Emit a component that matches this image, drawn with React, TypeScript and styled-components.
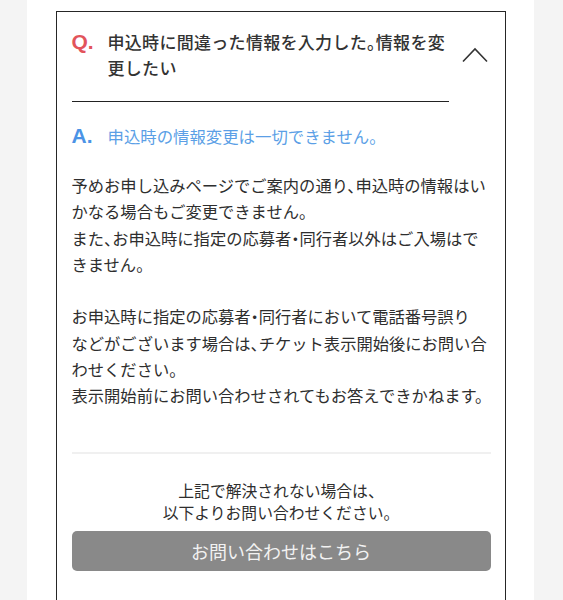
import React from "react";
import styled, { createGlobalStyle } from "styled-components";

const GlobalStyle = createGlobalStyle`
  body {
    margin: 0;
    background: #f4f4f4;
    font-family: "Noto Sans CJK JP", "Noto Sans", sans-serif;
  }
`;

const Page = styled.div`
  width: 507px;
  min-height: 600px;
  margin-left: 27px;
  background: #fff;
  padding-top: 11px;
  box-sizing: border-box;
`;

const FaqBox = styled.div`
  width: 450px;
  margin-left: 29px;
  border: 1.5px solid #262626;
  box-sizing: border-box;
  padding: 17px 14.5px 40px;
`;

const QuestionRow = styled.div`
  display: flex;
  align-items: flex-start;
`;

const QuestionHead = styled.div`
  display: flex;
  width: 377px;
  padding-bottom: 20px;
  border-bottom: 1.5px solid #222;
`;

const Mark = styled.span<{ $color: string }>`
  flex: 0 0 36px;
  font: bold 21px "Liberation Sans", Arial, sans-serif;
  line-height: 26px;
  color: ${(p) => p.$color};
`;

const QuestionText = styled.div`
  width: 341px;
  font-size: 17px;
  font-weight: 500;
  letter-spacing: 0.3px;
  line-height: 26px;
  color: #333;
  font-feature-settings: "halt";
`;

const Chevron = styled.svg`
  margin: 18px 0 0 13px;
  flex: none;
`;

const AnswerHead = styled.div`
  display: flex;
  margin-top: 21px;
`;

const AnswerTitle = styled.div`
  font-size: 16.4px;
  line-height: 26px;
  color: #5b9fe6;
`;

const AnswerBody = styled.p`
  margin: 23px 0 0;
  font-size: 16.3px;
  line-height: 26.3px;
  color: #2e2e2e;
  white-space: nowrap;
  font-feature-settings: "halt";
`;

const Divider = styled.hr`
  margin: 43px 0 0;
  border: none;
  border-top: 2px solid #f0f0f0;
`;

const Note = styled.p`
  margin: 26px 0 0;
  text-align: center;
  font-size: 15.8px;
  line-height: 22px;
  color: #2e2e2e;
`;

const ContactButton = styled.button`
  display: block;
  width: 100%;
  height: 40px;
  margin-top: 7px;
  border: none;
  border-radius: 5px;
  background: #898989;
  color: #f2f2f2;
  font-family: "Noto Sans CJK JP", "Noto Sans", sans-serif;
  font-size: 18px;
  cursor: pointer;
`;

const answerLines = [
  "予めお申し込みページでご案内の通り、申込時の情報はい",
  "かなる場合もご変更できません。",
  "また、お申込時に指定の応募者・同行者以外はご入場はで",
  "きません。",
  "",
  "お申込時に指定の応募者・同行者において電話番号誤り",
  "などがございます場合は、チケット表示開始後にお問い合",
  "わせください。",
  "表示開始前にお問い合わせされてもお答えできかねます。",
];

const App: React.FC = () => {
  return (
    <>
      <GlobalStyle />
      <Page>
        <FaqBox>
          <QuestionRow>
            <QuestionHead>
              <Mark $color="#e2545b">Q.</Mark>
              <QuestionText>
                申込時に間違った情報を入力した。情報を変
                <br />
                更したい
              </QuestionText>
            </QuestionHead>
            <Chevron width="26" height="16" viewBox="0 0 26 16">
              <polyline
                points="1,14.5 13,2 25,14.5"
                fill="none"
                stroke="#333"
                strokeWidth="1.6"
              />
            </Chevron>
          </QuestionRow>
          <AnswerHead>
            <Mark $color="#4b93e6">A.</Mark>
            <AnswerTitle>申込時の情報変更は一切できません。</AnswerTitle>
          </AnswerHead>
          <AnswerBody>
            {answerLines.map((line, i) => (
              <React.Fragment key={i}>
                {line}
                {i < answerLines.length - 1 && <br />}
              </React.Fragment>
            ))}
          </AnswerBody>
          <Divider />
          <Note>
            上記で解決されない場合は、
            <br />
            以下よりお問い合わせください。
          </Note>
          <ContactButton>お問い合わせはこちら</ContactButton>
        </FaqBox>
      </Page>
    </>
  );
};

export default App;
